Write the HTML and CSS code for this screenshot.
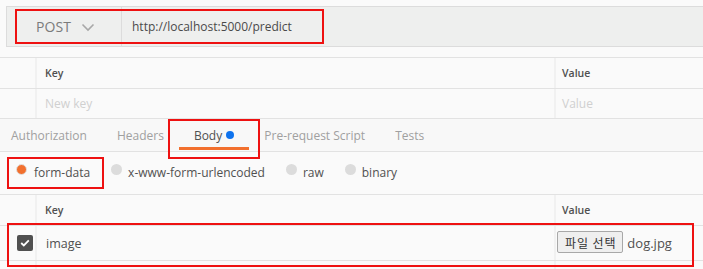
FILE: index.html
```html
<!DOCTYPE html>
<html>
<head>
<meta charset="utf-8">
<link rel="stylesheet" href="styles.css">
</head>
<body>
<div class="page">
  <div class="urlbar">
    <div class="method">POST
      <svg class="chev" width="14" height="9" viewBox="0 0 14 9"><path d="M1.5 1.5 L7 7 L12.5 1.5" fill="none" stroke="#a8a8a8" stroke-width="1.6"/></svg>
    </div>
    <div class="url">http://localhost:5000/predict</div>
  </div>
  <div class="gap"></div>
  <div class="table">
    <div class="row head"><div class="gut"></div><div class="kcol">Key</div><div class="vcol">Value</div></div>
    <div class="row"><div class="gut"></div><div class="kcol ph">New key</div><div class="vcol ph">Value</div></div>
  </div>
  <div class="tabs">
    <div class="tab">Authorization</div>
    <div class="tab">Headers</div>
    <div class="tab active">Body <span class="dot"></span></div>
    <div class="tab">Pre-request Script</div>
    <div class="tab">Tests</div>
  </div>
  <div class="modes">
    <div class="opt"><span class="radio on"></span>form-data</div>
    <div class="opt"><span class="radio"></span>x-www-form-urlencoded</div>
    <div class="opt"><span class="radio"></span>raw</div>
    <div class="opt"><span class="radio"></span>binary</div>
  </div>
  <div class="table t2">
    <div class="row head"><div class="gut"></div><div class="kcol">Key</div><div class="vcol">Value</div></div>
    <div class="row data"><div class="gut"><span class="check"><svg width="10" height="8" viewBox="0 0 10 8"><path d="M1.2 4 L3.8 6.4 L8.8 1.4" fill="none" stroke="#fff" stroke-width="1.8"/></svg></span></div><div class="kcol val">image</div><div class="vcol"><span class="filebtn">파일 선택</span><span class="fname">dog.jpg</span></div></div>
    <div class="row"><div class="gut"></div><div class="kcol"></div><div class="vcol"></div></div>
  </div>

  <div class="mark m1"></div>
  <div class="mark m2"></div>
  <div class="mark m3"></div>
  <div class="mark m4"></div>
</div>
</body>
</html>
```

FILE: styles.css
```css
html, body {
  margin: 0;
  padding: 0;
  background: #fafafa;
  overflow: hidden;
}
body {
  font-family: "Open Sans", "Noto Sans CJK KR", sans-serif;
  color: #505050;
}
.page {
  position: relative;
  width: 703px;
  height: 269px;
  padding-top: 6px;
  box-sizing: border-box;
  overflow: hidden;
}
.urlbar {
  margin-left: 6px;
  height: 39px;
  background: #eeefee;
  border: 1px solid #dcdcdc;
  border-right: none;
  display: flex;
  align-items: stretch;
}
.method {
  width: 115px;
  box-sizing: border-box;
  padding-left: 29px;
  border-right: 1px solid #dcdcdc;
  display: flex;
  align-items: center;
  font-size: 14px;
  color: #7b7b7b;
  letter-spacing: 0.1px;
}
.chev {
  margin-left: 10px;
  margin-top: 1px;
}
.url {
  display: flex;
  align-items: center;
  padding-left: 10px;
  font-size: 12px;
  color: #4a4a4a;
}
.gap {
  height: 10px;
}
.table {
  border-top: 1px solid #e2e2e2;
}
.row {
  display: grid;
  grid-template-columns: 35px 519px 1fr;
  border-bottom: 1px solid #e2e2e2;
  height: 29px;
}
.row.head {
  height: 30px;
}
.kcol, .vcol {
  border-left: 2px solid #f1f1f1;
  display: flex;
  align-items: center;
  font-size: 12px;
}
.kcol {
  padding-left: 8px;
}
.vcol {
  padding-left: 6px;
}
.head .kcol, .head .vcol {
  font-size: 10.5px;
  font-weight: 600;
  color: #505050;
}
.ph {
  color: #d0d0d0;
}
.tabs {
  display: flex;
  height: 32px;
  border-bottom: 1px solid #e2e2e2;
  background: #f8f8f8;
}
.tab {
  position: relative;
  padding: 0 15px;
  display: flex;
  align-items: center;
  font-size: 12px;
  color: #a0a0a0;
  white-space: pre;
}
.tab:first-child {
  padding-left: 11px;
}
.tab.active {
  color: #505050;
}
.tab.active::after {
  content: "";
  position: absolute;
  left: 0;
  right: 0;
  bottom: 1px;
  height: 3px;
  background: #f2702e;
}
.dot {
  display: inline-block;
  width: 8px;
  height: 8px;
  border-radius: 50%;
  background: #0f73ee;
  margin-left: 1px;
}
.modes {
  display: flex;
  align-items: center;
  height: 42px;
  padding-left: 16px;
  padding-bottom: 1px;
  box-sizing: border-box;
  background: #fafafa;
}
.opt {
  display: flex;
  align-items: center;
  font-size: 12px;
  color: #505050;
  margin-right: 21px;
}
.radio {
  width: 11px;
  height: 11px;
  border-radius: 50%;
  background: #dcdcdc;
  box-sizing: border-box;
  margin-right: 6px;
  margin-bottom: 6px;
}
.radio.on {
  background: #f2702e;
  border: 1.5px solid #e2e2e2;
  margin-right: 7px;
}
.row.data {
  height: 34px;
}
.gut {
  display: flex;
  align-items: center;
}
.check {
  width: 16px;
  height: 16px;
  margin-left: 17px;
  margin-bottom: 1px;
  background: #505050;
  border-radius: 2px;
  display: flex;
  align-items: center;
  justify-content: center;
}
.val {
  padding-left: 9px;
  font-size: 12.5px;
  color: #505050;
}
.filebtn {
  display: inline-flex;
  align-items: center;
  height: 22px;
  box-sizing: border-box;
  padding: 0 6px 0 7px;
  background: #efefef;
  border: 1px solid #a8a8a8;
  border-radius: 2px;
  font-family: "Noto Sans CJK KR", sans-serif;
  font-size: 12px;
  letter-spacing: 0.9px;
  color: #333;
  margin-left: -5px;
  margin-bottom: 2px;
}
.fname {
  margin-left: 4px;
  font-size: 13px;
  color: #505050;
}
.mark {
  position: absolute;
  border: 2px solid #ee1111;
  box-sizing: border-box;
}
.m1 { left: 15px; top: 9px; width: 309px; height: 35px; }
.m2 { left: 168px; top: 119px; width: 92px; height: 40px; }
.m3 { left: 7px; top: 157px; width: 97px; height: 32px; }
.m4 { left: 7px; top: 223px; width: 687px; height: 44px; }
```
